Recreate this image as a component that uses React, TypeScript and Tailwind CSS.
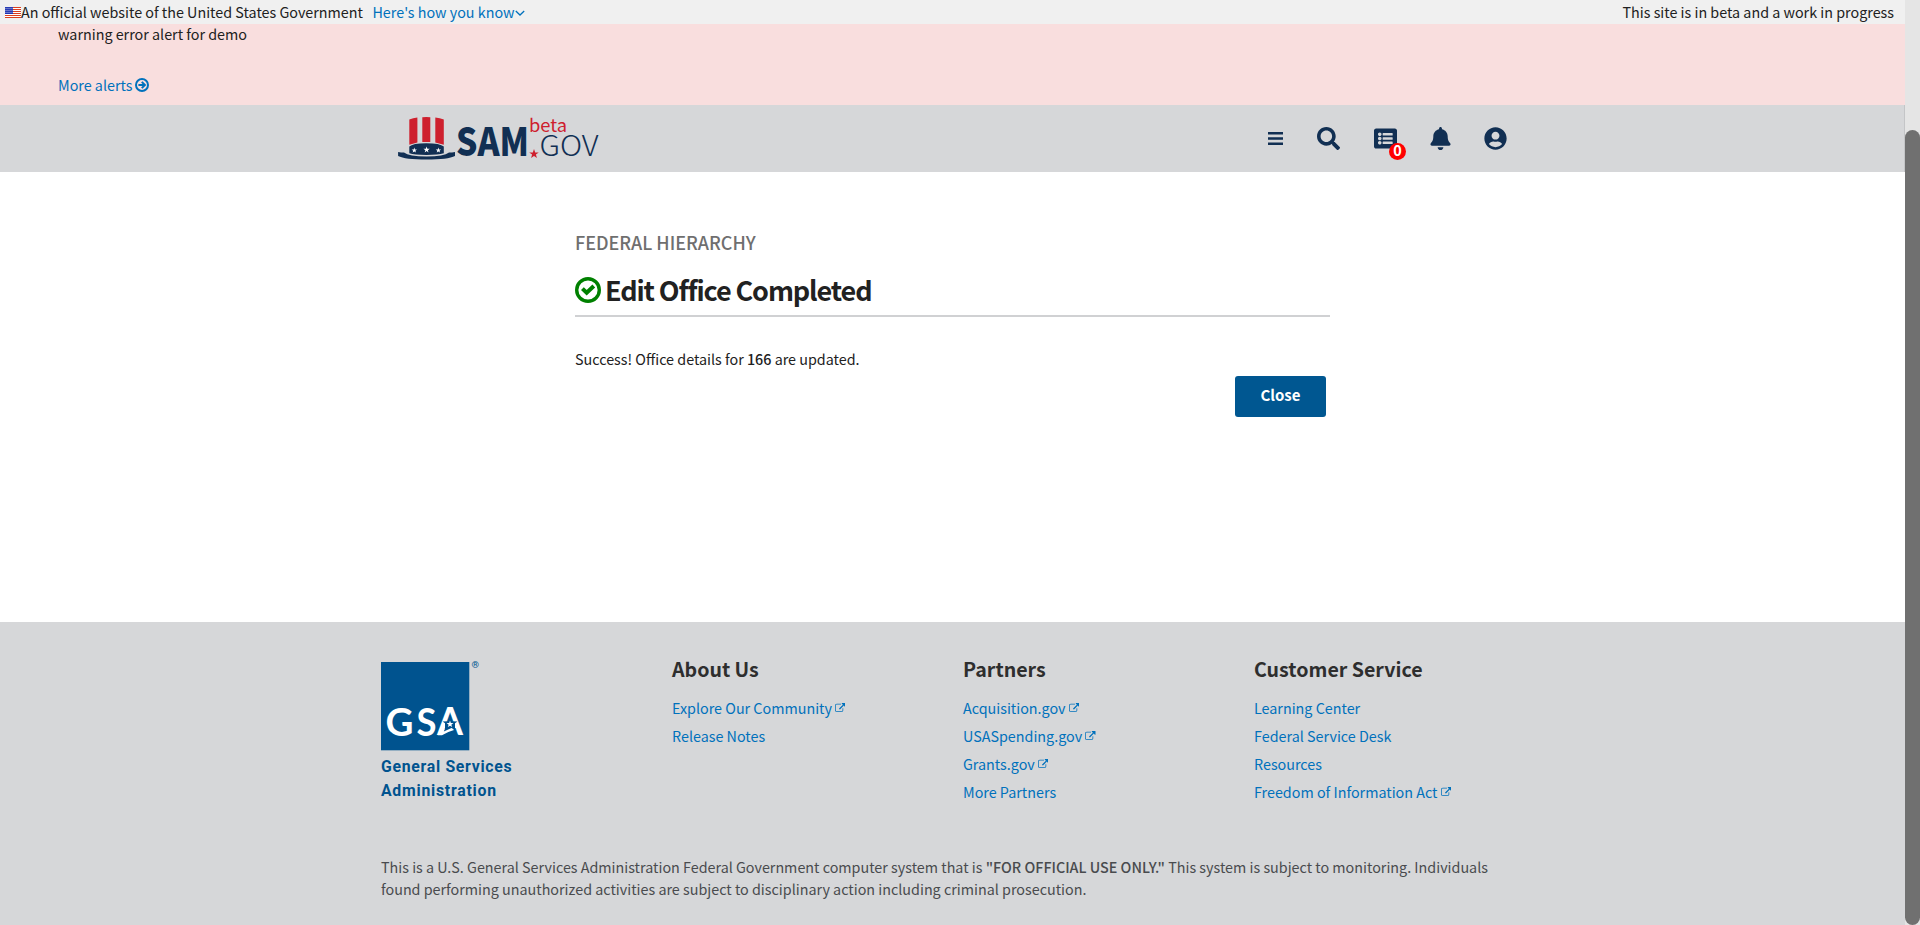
import type { ReactNode } from "react";
import { FaBell, FaListAlt, FaSearch, FaUserCircle } from "react-icons/fa";

type FooterLink = { label: string; external?: boolean };

const COLUMNS: { title: string; links: FooterLink[] }[] = [
  {
    title: "About Us",
    links: [{ label: "Explore Our Community", external: true }, { label: "Release Notes" }],
  },
  {
    title: "Partners",
    links: [
      { label: "Acquisition.gov", external: true },
      { label: "USASpending.gov", external: true },
      { label: "Grants.gov", external: true },
      { label: "More Partners" },
    ],
  },
  {
    title: "Customer Service",
    links: [
      { label: "Learning Center" },
      { label: "Federal Service Desk" },
      { label: "Resources" },
      { label: "Freedom of Information Act", external: true },
    ],
  },
];

const STAR = "M0-1L.235-.324L.951-.309L.38.124L.588.809L0 .4L-.588.809L-.38.124L-.951-.309L-.235-.324Z";

function Flag() {
  return (
    <svg className="h-[11px] w-4 shrink-0" viewBox="0 0 16 11">
      <rect width="16" height="11" fill="#fff" />
      {[0, 2, 4, 6, 8, 10].map((y) => (
        <rect key={y} y={y} width="16" height="1" fill="#db3e1f" />
      ))}
      <rect width="8" height="7" fill="#1e33b1" />
      {[1.2, 3.2, 5.2].map((y) =>
        [1, 3, 5, 7].map((x) => <circle key={`${x}-${y}`} cx={x} cy={y} r="0.5" fill="#fff" />),
      )}
    </svg>
  );
}

function ExternalIcon() {
  return (
    <svg className="mt-px ml-[3px] size-[10.5px]" viewBox="0 0 1792 1792" fill="currentColor">
      <path d="M1408 928v320q0 119-84.5 203.5t-203.5 84.5h-832q-119 0-203.5-84.5t-84.5-203.5v-832q0-119 84.5-203.5t203.5-84.5h704q14 0 23 9t9 23v64q0 14-9 23t-23 9h-704q-66 0-113 47t-47 113v832q0 66 47 113t113 47h832q66 0 113-47t47-113v-320q0-14 9-23t23-9h64q14 0 23 9t9 23zm384-864v512q0 26-19 45t-45 19-45-19l-176-176-652 652q-10 10-23 10t-23-10l-114-114q-10-10-10-23t10-23l652-652-176-176q-19-19-19-45t19-45 45-19h512q26 0 45 19t19 45z" />
    </svg>
  );
}

function SamLogo() {
  return (
    <svg className="mb-[3px] h-[46px] w-[202px] overflow-visible" viewBox="0 0 202 46">
      <g fill="#ce202e">
        <path d="M11.3 5.6Q15 4.1 19.4 3.6V28.5L11.3 30.8Z" />
        <path d="M24.3 3.2Q28.3 2.8 32.3 3.2V28H24.3Z" />
        <path d="M37.3 3.6Q42 4.1 45.8 5.6V30.8L37.3 28.5Z" />
        <path transform="translate(136 40) scale(5)" d={STAR} />
      </g>
      <g fill="#112f53">
        <path d="M11.3 32.6Q14.5 29.2 28.3 29.2T45.8 32.6V39.3Q40 40.9 28.3 40.9T11.3 39.3Z" />
        <path d="M.1 38.1Q3 38.6 6 38.6Q11 42.5 28.5 42.5T51 38.6Q54 38.6 57 38.1V41.9Q50 45.4 28.5 45.4T.1 41.9Z" />
      </g>
      <g fill="#fff">
        <path transform="translate(16.3 36.3) scale(2.8)" d={STAR} />
        <path transform="translate(28.6 35.8) scale(3.3)" d={STAR} />
        <path transform="translate(40.4 36.3) scale(2.8)" d={STAR} />
      </g>
      <text x="58" y="42" textLength="73" lengthAdjust="spacingAndGlyphs" className="fill-[#112f53] font-['Noto_Sans_CJK_SC'] text-[39px] font-black">
        SAM
      </text>
      <text x="131" y="18.2" textLength="38" lengthAdjust="spacingAndGlyphs" className="fill-[#ce202e] font-['Noto_Sans_CJK_SC'] text-[18px]">
        beta
      </text>
      <text x="141.5" y="42.2" textLength="59" lengthAdjust="spacingAndGlyphs" className="fill-[#112f53] font-['Noto_Sans_CJK_SC'] text-[29px] font-light">
        GOV
      </text>
    </svg>
  );
}

function GsaLogo() {
  return (
    <svg className="h-[140px] w-[140px] overflow-visible" viewBox="0 0 140 140">
      <rect width="88.3" height="88.3" fill="#00538f" />
      <text x="4.5" y="73.5" className="fill-white font-['Lato'] text-[39px] font-bold" textLength="28" lengthAdjust="spacingAndGlyphs">
        G
      </text>
      <text x="35.6" y="73.5" className="fill-white font-['Lato'] text-[39px] font-bold" textLength="20" lengthAdjust="spacingAndGlyphs">
        S
      </text>
      <text x="56" y="73.2" className="fill-white font-['Lato'] text-[39px] font-bold" textLength="26" lengthAdjust="spacingAndGlyphs">
        A
      </text>
      <rect x="64" y="61" width="10" height="12.7" fill="#00538f" />
      <path d="M56.8 73.2L60.6 65L64 66.5L62.8 69.6L71.6 65.6L73 68Q66 70 61 73.2Z" fill="#fff" />
      <path transform="translate(69 61.8) scale(7.8)" d={STAR} fill="#00538f" />
      <path transform="translate(69 62.2) scale(3.6)" d={STAR} fill="#fff" />
      <text x="90.5" y="6.3" className="fill-[#00538f] font-['Roboto'] text-[9.5px] font-medium">
        ®
      </text>
      <text x="0" y="110.2" textLength="130.6" className="fill-[#00538f] font-['Roboto'] text-[15.8px] font-bold">
        General Services
      </text>
      <text x="0" y="133.8" textLength="115" className="fill-[#00538f] font-['Roboto'] text-[15.8px] font-bold">
        Administration
      </text>
    </svg>
  );
}

function Anchor({ children }: { children: ReactNode }) {
  return (
    <a href="#" className="flex items-center text-[#0071bc]">
      {children}
    </a>
  );
}

export default function App() {
  return (
    <div className="flex h-[925px] w-full overflow-hidden bg-white font-['Noto_Sans_CJK_SC','Source_Sans_Pro',sans-serif] text-[14.34px] text-[#212121]">
      <div className="flex min-w-0 flex-1 flex-col">
        <div className="flex h-6 items-center bg-[#f0f0f0] pr-[11px] pl-[5px] leading-6">
          <Flag />
          <span>An official website of the United States Government</span>
          <div className="ml-[9.5px]">
            <Anchor>
              Here's how you know
              <svg className="mt-0.5 size-[10px]" viewBox="0 0 10 10" fill="none" stroke="currentColor" strokeWidth="1.3">
                <path d="M.8 3L5 7L9.2 3" />
              </svg>
            </Anchor>
          </div>
          <span className="ml-auto">This site is in beta and a work in progress</span>
        </div>

        <div className="h-[81px] bg-[#f9dede] pl-[58px] leading-5">
          <p>warning error alert for demo</p>
          <div className="mt-[31px]">
            <Anchor>
              More alerts
              <svg className="ml-[3px] size-[14px]" viewBox="0 0 14 14" fill="none" stroke="currentColor" strokeWidth="2">
                <circle cx="7" cy="7" r="6" />
                <path d="M3.4 7H9.4M6.8 3.9L9.9 7L6.8 10.1" />
              </svg>
            </Anchor>
          </div>
        </div>

        <header className="flex h-[67px] items-center border-r border-[#c4c5c7] bg-[#d6d7d9] pl-[398px] text-[#112f53]">
          <SamLogo />
          <nav className="ml-[668px] flex items-center">
            <svg className="size-[15px]" viewBox="0 0 15 15" fill="currentColor">
              <path d="M0 1h15v2.4H0zM0 6.3h15v2.4H0zM0 11.6h15V14H0z" />
            </svg>
            <FaSearch className="ml-[34px] size-[23px]" />
            <div className="relative ml-[34px]">
              <FaListAlt className="size-[23px]" />
              <span className="absolute top-[16px] left-[15px] flex size-[17px] justify-center rounded-full bg-[#ff0000] text-[14.4px] leading-[13px] font-bold text-white">
                0
              </span>
            </div>
            <FaBell className="ml-[32px] size-[23px]" />
            <FaUserCircle className="ml-[32px] size-[23px]" />
          </nav>
        </header>

        <main className="h-[450px] pl-[575px]">
          <div className="w-[755px] pt-[57px]">
            <p className="text-[18px] leading-[26px] font-medium text-[#6f6f6f]">FEDERAL HIERARCHY</p>
            <h1 className="mt-[15px] flex items-center border-b-2 border-[#d0d1d3] pb-[5px] text-[27px] leading-10 font-bold tracking-[-1.1px]">
              <svg className="mr-1 size-[26px]" viewBox="0 0 26 26" fill="none" stroke="#008000">
                <circle cx="13" cy="13" r="11.3" strokeWidth="3.4" />
                <path d="M7.4 11.6L11.7 15.8L18.8 9" strokeWidth="4" />
              </svg>
              Edit Office Completed
            </h1>
            <p className="mt-[32px] leading-5">
              Success! Office details for <span className="font-medium">166</span> are updated.
            </p>
            <div className="mt-[7px] flex justify-end pr-1">
              <button className="h-[41px] w-[91px] rounded-[3px] bg-[#005791] pb-0.5 text-[15px] font-bold text-white">Close</button>
            </div>
          </div>
        </main>

        <footer className="flex-1 bg-[#d6d7d9] pt-[35px] pl-[381px]">
          <div className="grid h-[199px] w-[1164px] grid-cols-4">
            <div className="pt-[5px]">
              <GsaLogo />
            </div>
            {COLUMNS.map((column) => (
              <section key={column.title}>
                <h2 className="text-[19.6px] leading-6 font-bold text-[#2e2e2e]">{column.title}</h2>
                <ul className="mt-[13px]">
                  {column.links.map((link) => (
                    <li key={link.label} className="h-7 leading-7">
                      <Anchor>
                        {link.label}
                        {link.external && <ExternalIcon />}
                      </Anchor>
                    </li>
                  ))}
                </ul>
              </section>
            ))}
          </div>
          <p className="w-[1130px] text-[14.34px] leading-[22.4px] text-[#494b4e]">
            This is a U.S. General Services Administration Federal Government computer system that is{" "}
            <span className="font-medium">"FOR OFFICIAL USE ONLY."</span> This system is subject to monitoring. Individuals found
            performing unauthorized activities are subject to disciplinary action including criminal prosecution.
          </p>
        </footer>
      </div>

      <div className="w-[15px] bg-[#e5e5e5] pt-[130px]">
        <div className="h-[795px] rounded-full bg-[#707070]" />
      </div>
    </div>
  );
}
